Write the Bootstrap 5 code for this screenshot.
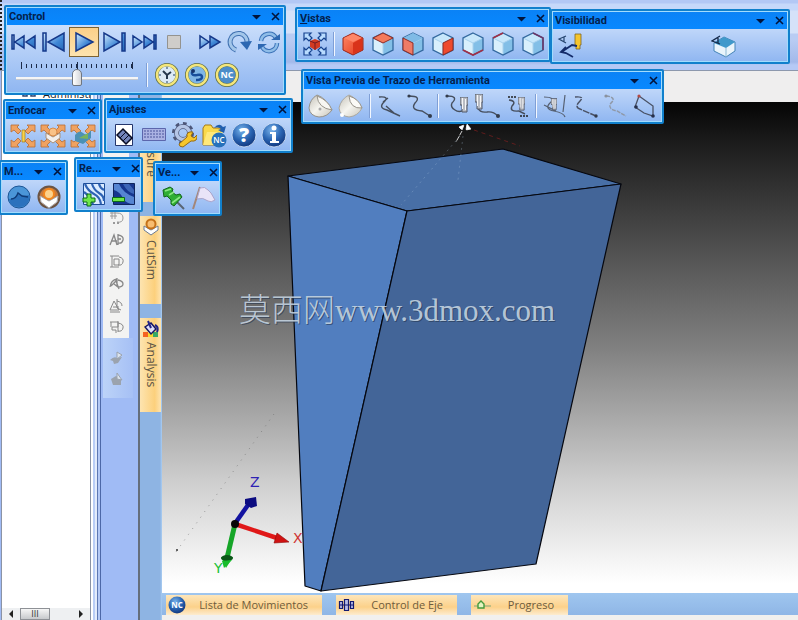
<!DOCTYPE html>
<html lang="es">
<head>
<meta charset="utf-8">
<meta name="viewport" content="width=device-width, initial-scale=1">
<title>Control</title>
<link rel="stylesheet" href="https://cdn.jsdelivr.net/npm/bootstrap@5.3.0/dist/css/bootstrap.min.css">
<style>
body{font-family:"Open Sans","Noto Sans",sans-serif;font-size:11px;line-height:16px;background:#a0bbf5;color:#041f4d}
.ribbon{height:71px;background:linear-gradient(#222 50%,transparent 50%) 0 0/2px 4px repeat-y,linear-gradient(#b3c8f5 0 3px,#c6d8fa 4px 10px,#d5e2f9 11px 33px,#b9ccf3 34px 40px,#a3b9ea 62px,#b5c9f5 65px);border-bottom:1px solid #8d98ad}
.tree{width:90px;background:#fff;border-left:1px solid #8b93a5;border-right:1px solid #8b93a5;margin-left:1px}
.tree-head{padding:15px 0 0 20px;height:40px;color:#222;gap:7px}
.hbar{height:12px;background:#eef0f2;padding:0 5px}
.hbar button{border:0;background:none;padding:0;width:8px;line-height:0}
.grip{width:30px;height:12px;border:1px solid #8e9196;background:linear-gradient(#f6f6f6,#c7c9cc);margin-left:5px;color:#333;font-size:9px;line-height:10px}
.splitter{width:11px;background:linear-gradient(90deg,#fff 0 2px,#b9cdf6 2px 4px,#e4ecfb 4px 6px,#5d78b3 6px 7px,#b4c9f6 7px 9px,#4d68a7 9px 10px,#a0bbf5 10px)}
.palette{width:38px;border-right:2px solid #656e7c;background:#a0bbf5}
.pal-a{width:26px;height:267px;background:#f3f3f2;padding-top:135px;margin-left:1px}
.pal-b{width:30px;height:60px;background:linear-gradient(90deg,#bcd3f8,#a6c0f5);padding-top:8px;margin-left:1px}
.pal-b button,.pal-a button{border:0;background:none;padding:0;width:26px;height:22px;line-height:0;display:block}
.pal-a svg,.pal-b svg{width:15px;height:15px}
.sidetabs{width:22px;background:linear-gradient(90deg,#8eb4e3 0 20px,#a9cdf2);padding-top:29px}
.sidetab{writing-mode:vertical-rl;width:21px;border:0;background:linear-gradient(90deg,#fde4b0,#fcd07c 70%,#fde3b0);color:#5d5546;padding:2px 0;font-size:12px;line-height:20px;text-align:left;margin-bottom:14px}
.sidetab svg{width:18px;height:18px}
.sidetab.t1{height:102px;padding-top:28px}.sidetab.t2{height:88px}.sidetab.t3{height:94px}
.topgap{height:31px;background:#efeeee}
.viewport{background:linear-gradient(#050505,#1b1b1b 8%,#808080 50%,#d0d0d0 78%,#fff 98%);min-height:0}
.bottomtabs{background:linear-gradient(#9fc6ef,#8fb6e6);height:22px;padding:2px 0 0 4px;gap:14px}
.btab{border:0;background:linear-gradient(#fde6bb,#fcd18a 60%,#fdeccf);color:#6e5c3d;height:20px;padding:0 14px 0 2px;font-size:11px;line-height:20px}
.btab svg{width:18px;height:18px}
.btab.mov{width:156px}.btab.eje{width:121px}.btab.pro{width:97px}
.underline-bar{height:5px;background:#f1f0ee}
/* floating tool windows */
.toolwin{position:absolute;border:2px solid #1180cc;outline:1px solid #a2dcfd;outline-offset:-3px;padding:1px;background:linear-gradient(#dfebfd,#c3d9fa 30%,#8fb6f1);height:55px;border-radius:2px}
.toolwin header{background:linear-gradient(#0a82f6,#0888ff);height:17px;padding:0 3px 0 2px;font-family:Roboto,"Open Sans",sans-serif;font-weight:700;line-height:17px}
.toolwin header button{border:0;background:none;padding:0;width:9px;line-height:0;color:#02143c;margin-left:10px}
.toolwin header svg{width:9px;height:9px}
.tools{height:33px;padding-left:2px}
.tools>button{flex:0 0 30px;border:0;background:none;padding:0;line-height:0;height:30px}
.tools svg{width:26px;height:26px}
.tools>button.on{background:linear-gradient(#fbd089,#fde3ae);border:1px solid #7b6234}
.vsep{width:2px;height:24px;margin:0 3px;background:linear-gradient(90deg,#7f9fd6 1px,#f2f7ff 1px)}
.w-control{left:4px;top:5px;width:282px;height:90px}
.w-vistas{left:295px;top:7px;width:256px}
.w-vis{left:550px;top:9px;width:240px}
.w-trazo{left:301px;top:69px;width:363px}
.w-enf{left:3px;top:99px;width:99px}
.w-aju{left:104px;top:98px;width:189px}
.w-m{left:-1px;top:160px;width:69px}
.w-re{left:74px;top:157px;width:69px}
.w-ve{left:153px;top:161px;width:69px}
.speed{width:122px;margin:0 8px 0 7px}
.ticks{height:7px;margin:0 5px;background:repeating-linear-gradient(90deg,#1c2b49 0 1px,transparent 1px 5px) 0 2px/100% 4px no-repeat,linear-gradient(#1c2b49,#1c2b49) 0 0/1px 7px no-repeat,linear-gradient(#1c2b49,#1c2b49) 50% 0/1px 7px no-repeat,linear-gradient(#1c2b49,#1c2b49) 100% 0/1px 7px no-repeat}
.speed input{appearance:none;-webkit-appearance:none;width:100%;height:18px;background:none;display:block;margin:0}
.speed input::-webkit-slider-runnable-track{height:3px;background:#f4f5f6;border-bottom:1px solid #c3c9d2}
.speed input::-webkit-slider-thumb{-webkit-appearance:none;width:10px;height:17px;margin-top:-8px;border:1px solid #6f7680;background:linear-gradient(90deg,#fff,#d2d4d8);border-radius:5px 5px 2px 2px}
</style>
<script src="https://cdn.jsdelivr.net/npm/bootstrap@5.3.0/dist/js/bootstrap.bundle.min.js"></script>
</head>
<body class="vh-100 d-flex flex-column overflow-hidden position-relative m-0">
<svg width="0" height="0" class="position-absolute" aria-hidden="true">
<defs>
<linearGradient id="gb" x1="0" y1="0" x2="1" y2="1"><stop offset="0" stop-color="#d3ecff"/><stop offset=".6" stop-color="#3f87d6"/><stop offset="1" stop-color="#2565b4"/></linearGradient>
<radialGradient id="gball" cx=".4" cy=".3" r=".8"><stop offset="0" stop-color="#79b3ea"/><stop offset=".5" stop-color="#2a65b3"/><stop offset="1" stop-color="#0c2c70"/></radialGradient>
<linearGradient id="gdish" x1="0" y1="0" x2="1" y2="1"><stop offset="0" stop-color="#c4c1b8"/><stop offset=".5" stop-color="#f6f5f0"/><stop offset="1" stop-color="#c9c6bb"/></linearGradient>
<linearGradient id="gred" x1="0" y1="0" x2="1" y2="1"><stop offset="0" stop-color="#ff8a68"/><stop offset="1" stop-color="#e23418"/></linearGradient>
</defs>
<symbol id="down" viewBox="0 0 9 9"><path d="M0 3h9L4.500 7.500z" fill="currentColor"/></symbol>
<symbol id="close" viewBox="0 0 9 9"><path d="M1 1l7 7M8 1L1 8" stroke="currentColor" stroke-width="1.600"/></symbol>
<symbol id="cube" viewBox="0 0 26 26"><path d="M13 2l10 5-10 5L3 7z" fill="#c7e7fb"/><path d="M3 7l10 5v12L3 19z" fill="#d9effc"/><path d="M23 7l-10 5v12l10-5z" fill="#83bfe7"/><path d="M3 7l10 5 10-5M13 12v12" fill="none" stroke="#a9d2ee"/><path d="M13 2l10 5v12l-10 5-10-5V7z" fill="none" stroke="#33699f" stroke-width="1.300"/></symbol>
<symbol id="axisnc" viewBox="0 0 26 26"><circle cx="13" cy="13" r="12" fill="#5b6a42"/><circle cx="13" cy="13" r="10" fill="none" stroke="#f4e67b" stroke-width="2.500"/></symbol>
<symbol id="mill" viewBox="0 0 8 16"><path d="M0 0h8v8H7v7H2V8H0z" fill="#b9bcc3" stroke="#515868"/><path d="M2.500 1v11M5.500 2v11" stroke="#f6f6f6"/></symbol>
</svg>

<div class="ribbon flex-shrink-0"></div>
<div class="d-flex flex-grow-1" style="min-height:0">
  <aside class="tree d-flex flex-column justify-content-between flex-shrink-0">
    <div class="tree-head d-flex align-items-start"><svg width="14" height="14" class="flex-shrink-0"><path d="M1 2v8h4V4M9 2v8h4V4M5 7h4" fill="none" stroke="#33456e" stroke-width="1.500"/></svg><span>Administr</span></div>
    <div class="hbar d-flex align-items-center">
      <button aria-label="Izquierda"><svg width="8" height="8"><path d="M6 0v8L2 4z" fill="#222"/></svg></button>
      <div class="grip text-center">III</div>
      <button class="ms-auto" aria-label="Derecha"><svg width="8" height="8"><path d="M2 0v8l4-4z" fill="#222"/></svg></button>
    </div>
  </aside>
  <div class="splitter flex-shrink-0"></div>
  <div class="palette flex-shrink-0">
    <div class="pal-a">
      <button aria-label="Malla"><svg viewBox="0 0 15 15"><g fill="none" stroke="#9a9a9a"><path d="M1 3h7M1 6h7M3 1v8M6 1v8M8 3q6 0 6 5t-6 4"/><path d="M4 13h8" stroke-dasharray="2 2" stroke-width="2"/></g></svg></button>
      <button aria-label="Texto"><svg viewBox="0 0 15 15"><path d="M1 13L5 3l3 10M2 9h6M9 2v11M9 3q6 1 5 5t-5 3M9 7h3" fill="none" stroke="#888" stroke-width="1.300"/></svg></button>
      <button aria-label="Cota"><svg viewBox="0 0 15 15"><path d="M1 2h9M1 13h9M3 2v11M5 5h5v6H5zM10 3q5 1 4 5t-5 3" fill="none" stroke="#888"/></svg></button>
      <button aria-label="Superficie"><svg viewBox="0 0 15 15"><path d="M1 11Q2 4 8 3M2 10l5-5 3 8M8 2v8M9 4q5 1 5 4t-5 3L5 8" fill="none" stroke="#888" stroke-width="1.300"/></svg></button>
      <button aria-label="Ángulo"><svg viewBox="0 0 15 15"><path d="M1 12L5 3l5 9zM1 14h10M8 1v9l4 2M8 3q5 1 5 5M4 9h6" fill="none" stroke="#888"/></svg></button>
      <button aria-label="Perfil"><svg viewBox="0 0 15 15"><path d="M1 2h8v5H3v3h4v3M2 2v5M9 1v11M9 3q6 1 5 5t-5 3" fill="none" stroke="#888"/></svg></button>
    </div>
    <div class="pal-b">
      <button aria-label="Corte"><svg viewBox="0 0 15 15"><path d="M1 10q4-4 7-2l5-1-4 6-4 1-1-3z" fill="#9ba3ae"/><path d="M8 2v7l5-4z" fill="#dce4ee" stroke="#9ba3ae"/></svg></button>
      <button aria-label="Bloque"><svg viewBox="0 0 15 15"><path d="M2 7l5-3 5 3v6H4z" fill="#9ba3ae"/><path d="M8 1v6l5 1z" fill="#dce4ee" stroke="#9ba3ae"/></svg></button>
    </div>
  </div>
  <nav class="sidetabs d-flex flex-column flex-shrink-0" aria-label="Paneles">
    <button class="sidetab t1 d-flex align-items-center"><span>Measure</span></button>
    <button class="sidetab t2 d-flex align-items-center"><svg viewBox="0 0 18 18"><path d="M2 8l7 4 7-4v4l-7 5-7-5z" fill="#fff" stroke="#6c7c94"/><circle cx="9" cy="6" r="4.500" fill="#f8bd70" stroke="#c57118" stroke-width="2"/></svg><span class="mt-1">CutSim</span></button>
    <button class="sidetab t3 d-flex align-items-center"><svg viewBox="0 0 18 18"><path d="M1 12h5v5H1z" fill="#f66220"/><path d="M6 13h5v4H6z" fill="#f7d72d"/><path d="M11 12h5v5h-5z" fill="#38a866"/><path d="M3 7l6-4 5 6-5 5z" fill="#e1def8" stroke="#151560" stroke-width="1.500"/><path d="M6 1l3 7M13 5q4 2 2 7" fill="none" stroke="#22248a" stroke-width="2"/></svg><span class="mt-1">Analysis</span></button>
  </nav>
  <main class="d-flex flex-column flex-grow-1" style="min-width:0">
    <div class="topgap flex-shrink-0"></div>
    <div class="viewport flex-grow-1">
      <svg class="w-100 h-100 d-block" viewBox="162 102 636 491" preserveAspectRatio="xMinYMin meet" role="img" aria-label="Modelo">
        <g stroke="#05070f" stroke-width="1.200" stroke-linejoin="round">
          <path d="M288 176L503 149 621 184 407 211z" fill="#486fa6"/>
          <path d="M288 176L407 211 321 591 305 586z" fill="#517ebf"/>
          <path d="M407 211L621 184 536 564 321 591z" fill="#436598"/>
        </g>
        <path d="M460 136L401 205M463 136L458 180" stroke="#a9c4dd" stroke-opacity=".3" stroke-dasharray="2 4"/>
        <path d="M474 130L520 146" stroke="#8f2020" stroke-opacity=".6" stroke-dasharray="4 4"/>
        <path d="M459 127l5-2-2 5zM467 124l4 5-5 1zM462 131l-6 11" fill="#fff" stroke="#fff" stroke-width=".8" stroke-dasharray="5 1"/>
        <path d="M274 414L176 552" stroke="#666" stroke-opacity=".6" stroke-dasharray="1 6"/>
        <circle cx="177" cy="550" r="1" fill="#333"/>
        <path d="M235 524l45 15" stroke="#e01818" stroke-width="4.500"/><path d="M277 533l12 9-15 1z" fill="#d01212" stroke="#8d0909" stroke-width=".6"/>
        <path d="M235 524l-8 34" stroke="#16a528" stroke-width="5"/><path d="M221 557h12l-7 11z" fill="#18bd2c"/><ellipse cx="227" cy="558" rx="6" ry="3" fill="#0b5718"/><path d="M222 561l10-1-8 8z" fill="#18bd2c"/>
        <path d="M236 522l12-17" stroke="#1313a0" stroke-width="4.500"/><path d="M245 499l11-2 1 9-6 2-6-4z" fill="#0c0c80"/>
        <circle cx="235" cy="524" r="4" fill="#080808"/>
        <g font-family="DejaVu Sans, sans-serif" font-size="14">
          <text x="250" y="487" fill="#2e22b4">Z</text><text x="293" y="543" fill="#cf3434">X</text><text x="214" y="573" fill="#22c138">Y</text>
        </g>
        <g font-family="Noto Sans CJK SC, sans-serif" font-size="32" font-weight="300">
          <text x="240" y="322" fill="#26364f" fill-opacity=".6" aria-hidden="true">莫西网<tspan font-size="31" font-weight="400" font-family="Liberation Serif, serif">www.3dmox.com</tspan></text>
          <text x="239" y="321" fill="#c6d5e2" fill-opacity=".9">莫西网<tspan font-size="31" font-weight="400" font-family="Liberation Serif, serif">www.3dmox.com</tspan></text>
        </g>
      </svg>
    </div>
    <nav class="bottomtabs d-flex flex-shrink-0" aria-label="Vistas inferiores">
      <button class="btab mov d-flex align-items-center justify-content-between"><svg viewBox="0 0 18 18"><circle cx="9" cy="9" r="8.500" fill="url(#gball)"/><text x="9" y="12" text-anchor="middle" font-size="8" font-weight="700" fill="#fff">NC</text></svg>Lista de Movimientos</button>
      <button class="btab eje d-flex align-items-center justify-content-between"><svg viewBox="0 0 18 18"><path d="M1.500 5.500h3v7h-3zM6.500 3.500h4v11h-4zM12.500 5.500h3v7h-3zM1 9h15" fill="#b8bce8" stroke="#141970" stroke-width="1.200"/></svg>Control de Eje</button>
      <button class="btab pro d-flex align-items-center justify-content-between"><svg viewBox="0 0 18 18"><path d="M1 10h4M11 10h7" stroke="#7fa77b"/><path d="M5 12V8l3-3 3 3v4z" fill="#e5f4c0" stroke="#449a3c" stroke-width="1.400"/></svg>Progreso</button>
    </nav>
    <div class="underline-bar flex-shrink-0"></div>
  </main>
</div>

<section class="toolwin w-control">
  <header class="d-flex align-items-center"><span class="me-auto">Control</span><button aria-label="Opciones"><svg><use href="#down"/></svg></button><button aria-label="Cerrar"><svg><use href="#close"/></svg></button></header>
  <div class="tools d-flex align-items-center">
    <button aria-label="Inicio"><svg viewBox="0 0 26 26"><g fill="url(#gb)" stroke="#15388a" stroke-width="1.500"><path d="M1 6h2v14H1zM13 7v12L4 13zM24 7v12l-9-6z"/></g></svg></button>
    <button aria-label="Anterior"><svg viewBox="0 0 26 26"><g fill="url(#gb)" stroke="#15388a" stroke-width="1.500"><path d="M2 4h3v18H2zM23 4v18L7 13z"/></g></svg></button>
    <button class="on" aria-label="Reproducir"><svg viewBox="0 0 26 26"><path d="M5 4l17 9-17 9z" fill="url(#gb)" stroke="#15388a" stroke-width="1.500"/></svg></button>
    <button aria-label="Siguiente"><svg viewBox="0 0 26 26"><g fill="url(#gb)" stroke="#15388a" stroke-width="1.500"><path d="M21 4h3v18h-3zM3 4v18l16-9z"/></g></svg></button>
    <button aria-label="Final"><svg viewBox="0 0 26 26"><g fill="url(#gb)" stroke="#15388a" stroke-width="1.500"><path d="M23 6h2v14h-2zM2 7v12l9-6zM13 7v12l9-6z"/></g></svg></button>
    <button aria-label="Detener"><svg viewBox="0 0 26 26"><path d="M6.500 6.500h13v13h-13z" fill="#cfcdca" stroke="#94938f"/></svg></button>
    <span class="vsep"></span>
    <button aria-label="Avance rápido"><svg viewBox="0 0 26 26"><g fill="url(#gb)" stroke="#15388a" stroke-width="1.500"><path d="M3 7v12l9-6zM13 7v12l10-6z"/></g></svg></button>
    <button aria-label="Repetir"><svg viewBox="0 0 26 26"><path d="M9 21A8.500 8.500 0 1 1 20 14" fill="none" stroke="#3f70b0" stroke-width="5"/><path d="M9 21A8.500 8.500 0 1 1 20 14" fill="none" stroke="#a3c6ea" stroke-width="3"/><path d="M13 13l12-1-5 9z" fill="#2e68b2"/></svg></button>
    <button aria-label="Bucle"><svg viewBox="0 0 26 26"><g fill="none"><path d="M4 12A8 8 0 0 1 19 9M20 14A8 8 0 0 1 5 18" stroke="#3b72b8" stroke-width="4.500"/><path d="M4 12A8 8 0 0 1 19 9M20 14A8 8 0 0 1 5 18" stroke="#8fbde8" stroke-width="2.500"/></g><path d="M14 11h9V5zM10 15H1v6z" fill="#2e68b2"/></svg></button>
  </div>
  <div class="tools d-flex align-items-center">
    <div class="speed"><div class="ticks"></div><input type="range" min="0" max="100" value="50" aria-label="Velocidad"></div>
    <span class="vsep ms-0 me-1"></span>
    <button aria-label="Tiempo"><svg viewBox="0 0 26 26"><use href="#axisnc"/><circle cx="13" cy="13" r="8.500" fill="#dceaf5"/><path d="M9 9l4 4 4-3M13 13v4" stroke="#26384c" stroke-width="2" fill="none"/><path d="M13 5v2M13 19v2M5 13h2M19 13h2" stroke="#5d7893" stroke-width="1.500"/></svg></button>
    <button aria-label="Trazo"><svg viewBox="0 0 26 26"><use href="#axisnc"/><circle cx="13" cy="13" r="8.500" fill="#7fb6e6"/><path d="M8 10q-1 4 5 3 5-1 5 2t-6 3" stroke="#174e9c" stroke-width="2.500" fill="none"/><circle cx="9" cy="9" r="2" fill="#16336c"/></svg></button>
    <button aria-label="NC"><svg viewBox="0 0 26 26"><use href="#axisnc"/><circle cx="13" cy="13" r="8.500" fill="#4d8dc9"/><text x="13" y="16" text-anchor="middle" font-size="9" font-weight="700" fill="#fff">NC</text></svg></button>
  </div>
</section>

<section class="toolwin w-vistas">
  <header class="d-flex align-items-center"><span class="me-auto"><u>V</u>istas</span><button aria-label="Opciones"><svg><use href="#down"/></svg></button><button aria-label="Cerrar"><svg><use href="#close"/></svg></button></header>
  <div class="tools d-flex align-items-center">
    <button aria-label="Ajustar"><svg viewBox="0 0 26 26"><g fill="#b9dcff" stroke="#16428f" stroke-width="1.200"><path id="fa" d="M2 2h7L7 4l3 3-3 3-3-3-2 2z"/><use href="#fa" transform="matrix(-1 0 0 1 26 0)"/><use href="#fa" transform="matrix(1 0 0 -1 0 26)"/><use href="#fa" transform="rotate(180 13 13)"/></g><path d="M13 8l5 2v6l-5 3-5-3v-6z" fill="#d23a22"/><path d="M8 10l5 2 5-2M13 12v7" fill="none" stroke="#721a20"/></svg></button>
    <span class="vsep"></span>
    <button aria-label="Isométrica"><svg viewBox="0 0 26 26"><path d="M13 2l10 5v12l-10 5-10-5V7z" fill="url(#gred)" stroke="#9b2417"/><path d="M4 7l9-4 9 4-9 4z" fill="#ff8668"/><path d="M13 12l9-5v12l-9 4z" fill="#d9331a"/></svg></button>
    <button aria-label="Superior"><svg viewBox="0 0 26 26"><use href="#cube"/><path d="M13 2l10 5-10 5L3 7z" fill="#f47a5b" stroke="#8d2a25"/></svg></button>
    <button aria-label="Frontal"><svg viewBox="0 0 26 26"><use href="#cube"/><path d="M13 2l10 5-10 5L3 7z" fill="#7fbbe6"/><path d="M3 7l10 5v12L3 19z" fill="#ee7b66" stroke="#8d2a25"/></svg></button>
    <button aria-label="Derecha"><svg viewBox="0 0 26 26"><use href="#cube"/><path d="M23 7l-10 5v12l10-5z" fill="#ee4a2c" stroke="#8d2a25"/></svg></button>
    <button aria-label="Inferior"><svg viewBox="0 0 26 26"><use href="#cube"/><path d="M3 19l10 5 10-5" fill="none" stroke="#a03048" stroke-width="1.600"/></svg></button>
    <button aria-label="Posterior"><svg viewBox="0 0 26 26"><use href="#cube"/><path d="M3 7l10-5" fill="none" stroke="#a03048" stroke-width="1.600"/></svg></button>
    <button aria-label="Izquierda"><svg viewBox="0 0 26 26"><use href="#cube"/><path d="M13 2l10 5v12" fill="none" stroke="#6b3768" stroke-width="1.600"/></svg></button>
  </div>
</section>

<section class="toolwin w-vis">
  <header class="d-flex align-items-center"><span class="me-auto">Visibilidad</span><button aria-label="Opciones"><svg><use href="#down"/></svg></button><button aria-label="Cerrar"><svg><use href="#close"/></svg></button></header>
  <div class="tools d-flex align-items-center">
    <button aria-label="Ver herramienta"><svg viewBox="0 0 26 26"><path d="M9 3L2 6l7 4M7 4v5" fill="none" stroke="#26456f" stroke-width="1.200"/><path d="M18 1h6v11h-1v4h-4v-4h-1z" fill="#f6c52c" stroke="#7f6421" stroke-width=".8"/><path d="M20 13l-5-1-9 6M9 14l-5 5 5 1 7 4" fill="none" stroke="#142b69" stroke-width="1.800"/></svg></button>
    <button class="ms-auto me-5" aria-label="Ver pieza"><svg viewBox="0 0 26 26"><path d="M3 10l10-6 11 5v9l-9 6-12-6z" fill="#e9f4fb" stroke="#4484b7"/><path d="M3 10l10-6 11 5-9 6z" fill="#3f99cb"/><path d="M15 15v9" stroke="#8db9d4"/><path d="M9 3L1 8l8 3M7 5v5" fill="none" stroke="#122747" stroke-width="1.300"/></svg></button>
  </div>
</section>

<section class="toolwin w-trazo">
  <header class="d-flex align-items-center"><span class="me-auto">Vista Previa de Trazo de Herramienta</span><button aria-label="Opciones"><svg><use href="#down"/></svg></button><button aria-label="Cerrar"><svg><use href="#close"/></svg></button></header>
  <div class="tools d-flex align-items-center">
    <button aria-label="Superficie A"><svg viewBox="0 0 26 26"><path d="M9 2q9 3 15 15-5 7-13 7Q2 23 1 15 2 6 9 2z" fill="url(#gdish)" stroke="#97938a"/><path d="M9 3q1 12 15 14-4-10-15-14z" fill="#f7f6f2" stroke="#97938a"/><circle cx="12" cy="16" r="1.500" fill="#aaa"/></svg></button>
    <button aria-label="Superficie B"><svg viewBox="0 0 26 26"><path d="M11 2q8 3 13 13-4 8-13 9Q2 23 1 15 3 6 11 2z" fill="url(#gdish)" stroke="#aba89f"/><path d="M11 3q1 13 13 12-3-9-13-12z" fill="#fbfaf7" stroke="#97938a"/><circle cx="4" cy="22" r="2" fill="#fff"/></svg></button>
    <span class="vsep"></span>
    <button aria-label="Trazo 1"><svg viewBox="0 0 26 26"><path d="M3 4q11-1 5 5-6 6 3 8l13 6M12 5l-5 4M10 13l8 7" fill="none" stroke="#464f5e" stroke-width="1.400"/></svg></button>
    <button aria-label="Trazo 2"><svg viewBox="0 0 26 26"><path d="M3 3q13 0 6 7-5 7 7 8l8 5" fill="none" stroke="#464f5e" stroke-width="1.400"/><circle cx="3" cy="3" r="1.600" fill="#333b4b"/><circle cx="24" cy="23" r="2" fill="#333b4b"/></svg></button>
    <span class="vsep"></span>
    <button aria-label="Trazo 3"><svg viewBox="0 0 26 26"><path d="M3 3q12 0 5 7-2 4 3 7 4 3 9 0" fill="none" stroke="#464f5e" stroke-width="1.400"/><circle cx="3" cy="3" r="1.600" fill="#333b4b"/><use href="#mill" x="16" y="4" width="8" height="16"/></svg></button>
    <button aria-label="Trazo 4"><svg viewBox="0 0 26 26"><path d="M4 15q2 5 9 4 6-1 11 4" fill="none" stroke="#464f5e" stroke-width="1.400"/><circle cx="24" cy="23" r="2" fill="#333b4b"/><use href="#mill" x="1" y="1" width="8" height="16"/></svg></button>
    <button aria-label="Trazo 5"><svg viewBox="0 0 26 26"><path d="M4 4h9M16 23h9" stroke="#222" stroke-width="1.500" stroke-dasharray="2 1"/><path d="M5 7q8 1 3 6-3 6 7 5l6 3" fill="none" stroke="#464f5e" stroke-width="1.400"/><use href="#mill" x="14" y="4" width="7" height="14"/></svg></button>
    <span class="vsep"></span>
    <button aria-label="Trazo 6"><svg viewBox="0 0 26 26"><path d="M2 4q12 0 6 6t4 8 11 6M2 12l12 6M23 2l-2 17" fill="none" stroke="#566071" stroke-width="1.200"/><use href="#mill" x="9" y="5" width="6" height="13"/></svg></button>
    <button aria-label="Trazo 7"><svg viewBox="0 0 26 26"><path d="M3 4q10-1 5 4-6 6 0 8l16 7" fill="none" stroke="#495164" stroke-width="1.400" stroke-dasharray="7 1"/><circle cx="24" cy="23" r="1.700" fill="#333b4b"/></svg></button>
    <button aria-label="Trazo 8"><svg viewBox="0 0 26 26"><path d="M4 3q11 1 5 7-4 6 6 8l9 5" fill="none" stroke="#8f98a6" stroke-width="1.400" stroke-dasharray="4 1"/><circle cx="4" cy="3" r="1.600" fill="#8a929e"/></svg></button>
    <button aria-label="Trazo 9"><svg viewBox="0 0 26 26"><path d="M7 3l14 10v10l-9-3-9-6z" fill="none" stroke="#495164" stroke-width="1.300"/><g fill="#26304d"><circle cx="4" cy="14" r="1.800"/><circle cx="21" cy="23" r="1.800"/></g><circle cx="7" cy="3" r="1.600" fill="#b34a45"/></svg></button>
  </div>
</section>

<section class="toolwin w-enf">
  <header class="d-flex align-items-center"><span class="me-auto">Enfocar</span><button aria-label="Opciones"><svg><use href="#down"/></svg></button><button aria-label="Cerrar"><svg><use href="#close"/></svg></button></header>
  <div class="tools d-flex align-items-center">
    <button aria-label="Enfocar herramienta"><svg viewBox="0 0 26 26"><g id="corners" fill="#f0a261" stroke="#b86c32" stroke-width=".8"><path id="fo" d="M1 2h8L7 4l4 4-3 3-4-4-3 2z"/><use href="#fo" transform="matrix(-1 0 0 1 26 0)"/><use href="#fo" transform="matrix(1 0 0 -1 0 26)"/><use href="#fo" transform="rotate(180 13 13)"/></g><path d="M12 7h3v12h-3z" fill="#f9d447" stroke="#a47b24" stroke-width=".7"/></svg></button>
    <button aria-label="Enfocar pieza"><svg viewBox="0 0 26 26"><use href="#corners"/><path d="M6 10l7 4 7-4v5l-7 5-7-5z" fill="#f3efec" stroke="#a9917a"/><circle cx="13" cy="9" r="4" fill="#f9c288" stroke="#d98b47"/></svg></button>
    <button aria-label="Enfocar máquina"><svg viewBox="0 0 26 26"><use href="#corners"/><path d="M5 12q4-6 8-2t8-3v8l-8 6-8-3z" fill="#4b91b5"/><path d="M9 15l9-5v6z" fill="#79b25c"/></svg></button>
  </div>
</section>

<section class="toolwin w-aju">
  <header class="d-flex align-items-center"><span class="me-auto">Ajustes</span><button aria-label="Opciones"><svg><use href="#down"/></svg></button><button aria-label="Cerrar"><svg><use href="#close"/></svg></button></header>
  <div class="tools d-flex align-items-center">
    <button aria-label="Borrar"><svg viewBox="0 0 26 26"><path d="M4.500 2.500h17v21h-17z" fill="#fff" stroke="#25366c"/><path d="M6 13l6-6 9 9-6 6z" fill="#7384ba" stroke="#070b22" stroke-width="1.500"/><path d="M9 16l6-6M12 19l6-6" stroke="#070b22"/></svg></button>
    <button aria-label="Teclado"><svg viewBox="0 0 26 26"><path d="M1.500 6.500h23v12h-23z" fill="#aab2e3" stroke="#5c66ac"/><path d="M3 9h20M3 12h20M3 15h20" stroke="#6b74b4" stroke-width="1.500" stroke-dasharray="2 1"/></svg></button>
    <button aria-label="Opciones"><svg viewBox="0 0 26 26"><circle cx="12" cy="11" r="9.500" fill="none" stroke="#4d5678" stroke-width="3" stroke-dasharray="3.700 3.700"/><circle cx="12" cy="11" r="6.500" fill="none" stroke="#4d5678" stroke-width="5"/><circle cx="12" cy="11" r="6.500" fill="none" stroke="#b5c5e6" stroke-width="3.500"/><path d="M8 22l8-7q-1-6 6-5l-2 4 3 2 3-3q1 7-6 6l-8 6q-4 0-4-3z" fill="#f7c62b" stroke="#946a13"/></svg></button>
    <button aria-label="Abrir NC"><svg viewBox="0 0 26 26"><path d="M2 23V6l2-3h6l2 3h8v17z" fill="#fad94d" stroke="#a67a15"/><path d="M2 23l4-13h16l-4 13z" fill="#ffe87b"/><path d="M13 6q5-6 9-1l3-1-2 7-6-3 3-1q-3-3-7-1z" fill="#215fae"/><circle cx="18" cy="18" r="7.500" fill="#2671bb"/><text x="18" y="21" text-anchor="middle" font-size="8" font-weight="600" fill="#fff">NC</text></svg></button>
    <button aria-label="Ayuda"><svg viewBox="0 0 26 26"><circle cx="13" cy="13" r="12" fill="url(#gball)" stroke="#dce8fa" stroke-width=".8"/><text x="13" y="20" text-anchor="middle" font-size="20" font-weight="800" fill="#fff">?</text></svg></button>
    <button aria-label="Información"><svg viewBox="0 0 26 26"><circle cx="13" cy="13" r="12" fill="url(#gball)" stroke="#dce8fa" stroke-width=".8"/><circle cx="13" cy="6" r="2.500" fill="#fff"/><path d="M9 10h6v9h3v2H9v-2h2v-7H9z" fill="#fff"/></svg></button>
  </div>
</section>

<section class="toolwin w-m">
  <header class="d-flex align-items-center"><span class="me-auto">M...</span><button aria-label="Opciones"><svg><use href="#down"/></svg></button><button aria-label="Cerrar"><svg><use href="#close"/></svg></button></header>
  <div class="tools d-flex align-items-center">
    <button aria-label="Movimiento"><svg viewBox="0 0 26 26"><circle cx="13" cy="13" r="11" fill="#4b96d8" stroke="#1c5594"/><path d="M3 15q6 0 9-6l4 3 8-1q-1 12-11 12T3 15z" fill="#2b72bd"/><path d="M5 15q5 0 7-6l4 3 6 1" fill="none" stroke="#0f3b77" stroke-width="1.400"/></svg></button>
    <button aria-label="Material"><svg viewBox="0 0 26 26"><circle cx="13" cy="13" r="10.500" fill="#c9793a" stroke="#6b5444" stroke-width="2"/><path d="M4 12l9 5 9-5-1 6-8 6-8-6z" fill="#fff" stroke="#a2a8b2"/><circle cx="13" cy="10" r="5" fill="#fcd28d" stroke="#f3871e" stroke-width="2"/></svg></button>
  </div>
</section>

<section class="toolwin w-re">
  <header class="d-flex align-items-center"><span class="me-auto">Re...</span><button aria-label="Opciones"><svg><use href="#down"/></svg></button><button aria-label="Cerrar"><svg><use href="#close"/></svg></button></header>
  <div class="tools d-flex align-items-center">
    <button aria-label="Añadir región"><svg viewBox="0 0 26 26"><path d="M2.500 2.500h21v21h-21z" fill="#dcecff" stroke="#1d4d98"/><path d="M4 3q3 7 9 10t7 10M11 3q2 6 7 9t5 8M18 3q1 4 5 6M3 11q6 4 9 12" fill="none" stroke="#2e62b4" stroke-width="2.200"/><path d="M6 13h4v4h4v4h-4v4H6v-4H2v-4h4z" fill="#6ee64a" stroke="#0b6d15"/></svg></button>
    <button aria-label="Quitar región"><svg viewBox="0 0 26 26"><path d="M2.500 2.500h21v21h-21z" fill="#17368f" stroke="#10255e"/><path d="M3 3h5q4 9 15 13v7q-8 0-11-6T3 9z" fill="#5685d2"/><path d="M12 3h6l5 6v4Q16 11 12 3z" fill="#5685d2" opacity=".6"/><path d="M1.500 16.500h12v4h-12z" fill="#6ee64a" stroke="#0b6d15"/></svg></button>
  </div>
</section>

<section class="toolwin w-ve">
  <header class="d-flex align-items-center"><span class="me-auto">Ve...</span><button aria-label="Opciones"><svg><use href="#down"/></svg></button><button aria-label="Cerrar"><svg><use href="#close"/></svg></button></header>
  <div class="tools d-flex align-items-center">
    <button aria-label="Fijar"><svg viewBox="0 0 26 26"><path d="M15 15l9 9" stroke="#596574" stroke-width="2"/><path d="M3 5l7-3 3 2-1 3 4 3 4-1 2 3-8 9-3-2v-4L7 11l-3 1z" fill="#2fae34" stroke="#13651c"/><path d="M5 6l6-2M9 10l5-3M12 18l8-6" stroke="#8ce884" stroke-width="1.600"/></svg></button>
    <button aria-label="Bandera"><svg viewBox="0 0 26 26"><path d="M10 2L3 24" stroke="#a38678" stroke-width="2"/><path d="M10 3q5-2 8 2l3 3 4 7q-4 3-7 1-5-4-11-2z" fill="#e9e4f8" stroke="#aaa4cb"/></svg></button>
  </div>
</section>
</body>
</html>
